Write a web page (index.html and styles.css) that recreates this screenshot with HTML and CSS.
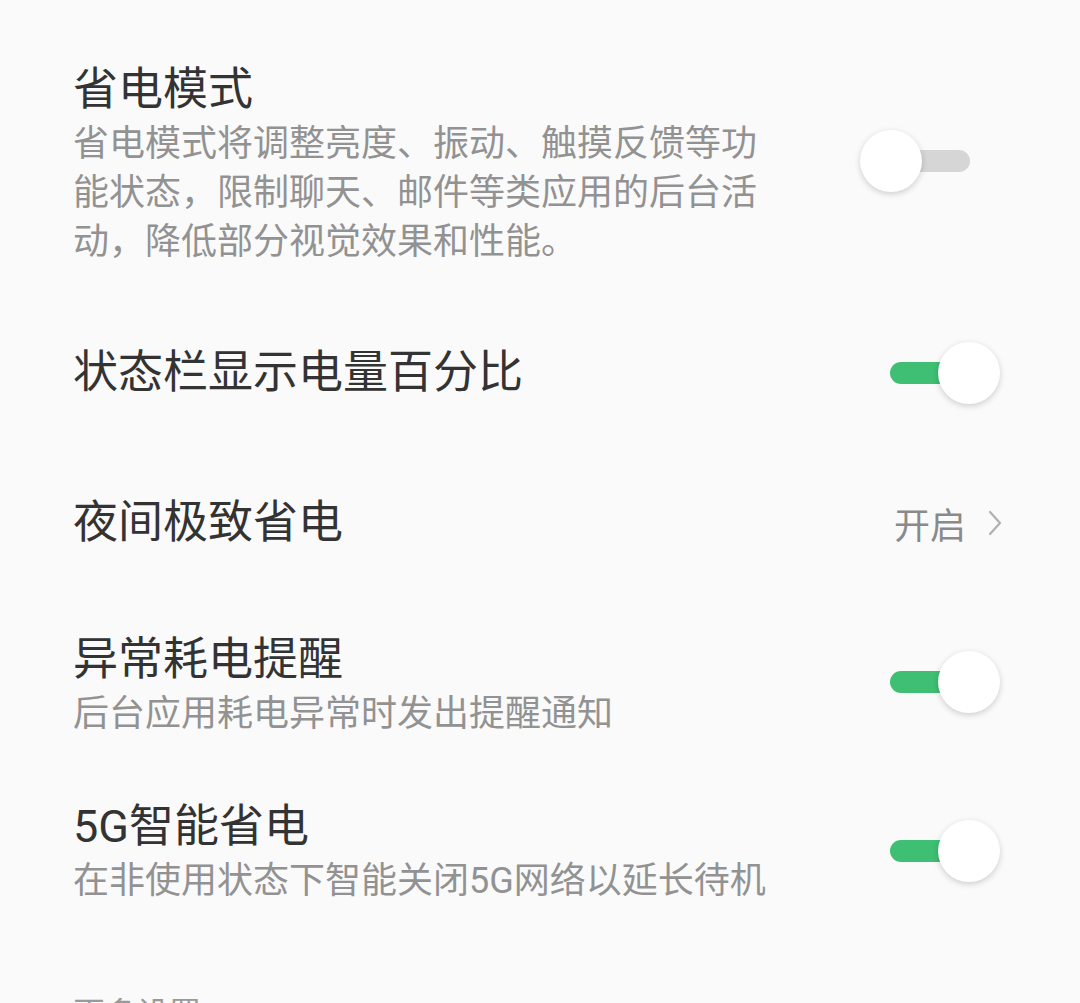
FILE: index.html
```html
<!DOCTYPE html>
<html lang="zh-CN">
<head>
    <meta charset="UTF-8">
    <meta name="viewport" content="width=device-width, initial-scale=1.0">
    <title>电池</title>
    <link rel="stylesheet" href="styles.css">
</head>
<body>
    <main class="settings">
        <div class="item item-first has-desc">
            <div class="text">
                <div class="title">省电模式</div>
                <div class="desc">省电模式将调整亮度、振动、触摸反馈等功能状态，限制聊天、邮件等类应用的后台活动，降低部分视觉效果和性能。</div>
            </div>
            <div class="switch"><span class="track"></span><span class="knob"></span></div>
        </div>

        <div class="item item-single">
            <div class="text">
                <div class="title">状态栏显示电量百分比</div>
            </div>
            <div class="switch on"><span class="track"></span><span class="knob"></span></div>
        </div>

        <div class="item item-single">
            <div class="text">
                <div class="title">夜间极致省电</div>
            </div>
            <div class="value">
                <span>开启</span>
                <svg class="chevron" width="14" height="26" viewBox="0 0 14 26">
                    <polyline points="2,2 12,13 2,24" fill="none" stroke="#b0b0b0" stroke-width="2.2" stroke-linecap="round" stroke-linejoin="round"/>
                </svg>
            </div>
        </div>

        <div class="item item-mid has-desc">
            <div class="text">
                <div class="title">异常耗电提醒</div>
                <div class="desc">后台应用耗电异常时发出提醒通知</div>
            </div>
            <div class="switch on"><span class="track"></span><span class="knob"></span></div>
        </div>

        <div class="item item-last has-desc">
            <div class="text">
                <div class="title">5G智能省电</div>
                <div class="desc">在非使用状态下智能关闭5G网络以延长待机</div>
            </div>
            <div class="switch on"><span class="track"></span><span class="knob"></span></div>
        </div>

        <div class="section">更多设置</div>
    </main>
</body>
</html>
```

FILE: styles.css
```css
body {
    margin: 0;
    background: #fafafa;
    font-family: Roboto, "Noto Sans CJK SC", sans-serif;
    color: #333;
    overflow: hidden;
}

.settings {
    padding: 62px 80px 0 73px;
}

.item {
    display: flex;
    align-items: center;
    justify-content: space-between;
}

.item-first {
    padding: 0 0 31px;
}

.item-single {
    min-height: 150px;
}

.item-mid {
    padding: 34px 0;
}

.item-last {
    padding: 26px 0 0;
}

.text {
    width: 710px;
}

.title {
    font-size: 45px;
    line-height: 56px;
    color: #333;
}

.desc {
    margin-top: 2px;
    font-size: 36px;
    line-height: 49px;
    color: #929292;
}

.has-desc .switch {
    margin-bottom: 7px;
}

.item-last .switch {
    margin-bottom: 3px;
}

.switch {
    position: relative;
    width: 140px;
    height: 62px;
    flex-shrink: 0;
}

.switch .track {
    position: absolute;
    left: 30px;
    top: 20px;
    width: 80px;
    height: 22px;
    border-radius: 11px;
    background: #d6d6d6;
}

.switch .knob {
    position: absolute;
    left: 0;
    top: 0;
    width: 62px;
    height: 62px;
    border-radius: 50%;
    background: #fff;
    box-shadow: 0 2px 6px rgba(0, 0, 0, 0.18);
}

.switch.on .track {
    background: #3fbf73;
}

.switch.on .knob {
    left: 78px;
}

.value {
    display: flex;
    align-items: center;
    gap: 22px;
    margin-right: -2px;
    font-size: 36px;
    color: #8a8a8a;
}

.section {
    margin-top: 86px;
    font-size: 32px;
    line-height: 44px;
    color: #9a9a9a;
}
```
